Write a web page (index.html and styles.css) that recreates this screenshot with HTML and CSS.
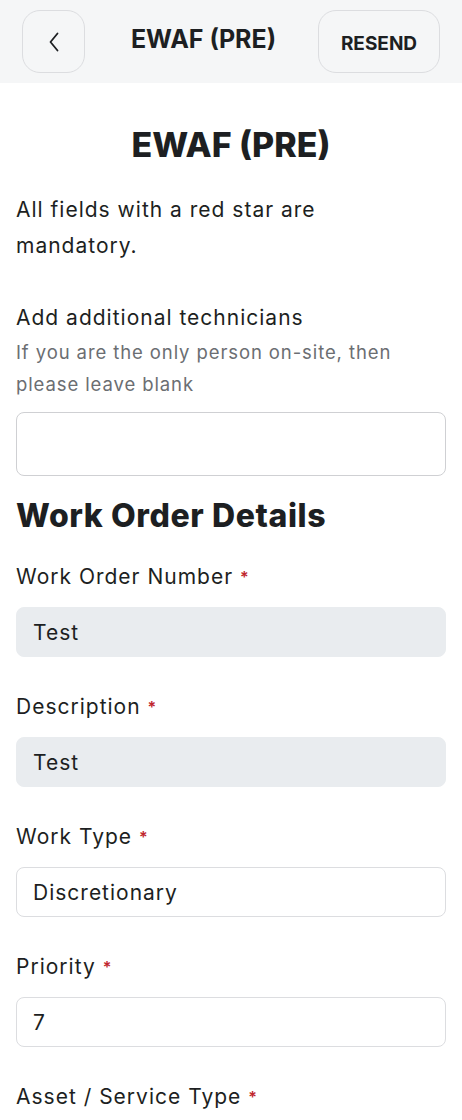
FILE: index.html
```html
<!DOCTYPE html>
<html lang="en">
<head>
    <meta charset="UTF-8">
    <meta name="viewport" content="width=device-width, initial-scale=1.0">
    <title>EWAF (PRE)</title>
    <link rel="stylesheet" href="styles.css">
</head>
<body>
    <!-- Barra superiore -->
    <header class="topbar">
        <button type="button" class="back-btn" aria-label="Back">
            <svg width="16" height="24" viewBox="0 0 16 24" fill="none">
                <path d="M11.5 3.5 L4.5 12 L11.5 20.5" stroke="#1d1f22" stroke-width="1.8" stroke-linecap="round" stroke-linejoin="round"/>
            </svg>
        </button>
        <div class="topbar-title">EWAF (PRE)</div>
        <button type="button" class="resend-btn">RESEND</button>
    </header>

    <main class="page">
        <h1>EWAF (PRE)</h1>
        <p class="intro">All fields with a red star are mandatory.</p>

        <div class="field">
            <label class="label">Add additional technicians</label>
            <p class="hint">If you are the only person on-site, then please leave blank</p>
            <input type="text" class="box box-tall">
        </div>

        <h2>Work Order Details</h2>

        <div class="field">
            <label class="label">Work Order Number <span class="req">*</span></label>
            <input type="text" class="box box-disabled" value="Test" readonly>
        </div>

        <div class="field">
            <label class="label">Description <span class="req">*</span></label>
            <input type="text" class="box box-disabled" value="Test" readonly>
        </div>

        <div class="field">
            <label class="label">Work Type <span class="req">*</span></label>
            <input type="text" class="box" value="Discretionary">
        </div>

        <div class="field">
            <label class="label">Priority <span class="req">*</span></label>
            <input type="text" class="box" value="7">
        </div>

        <div class="field">
            <label class="label">Asset / Service Type <span class="req">*</span></label>
            <input type="text" class="box">
        </div>
    </main>
</body>
</html>
```

FILE: styles.css
```css
/* Stile per la pagina */
body {
    font-family: "Inter", "Open Sans", sans-serif;
    margin: 0;
    padding: 0;
    background-color: #ffffff;
    color: #1d1f22;
}
.topbar {
    display: flex;
    align-items: center;
    justify-content: space-between;
    height: 83px;
    padding: 0 22px;
    background-color: #f5f6f7;
    box-sizing: border-box;
}
.back-btn, .resend-btn {
    height: 63px;
    background: #f5f6f7;
    border: 1px solid #dcdde0;
    border-radius: 18px;
    cursor: pointer;
}
.back-btn {
    width: 63px;
    display: flex;
    align-items: center;
    justify-content: center;
    padding: 0;
}
.resend-btn {
    width: 122px;
    font-family: inherit;
    font-size: 19px;
    font-weight: 700;
    color: #1d1f22;
    padding-top: 4px;
}
.topbar-title {
    font-size: 25px;
    font-weight: 700;
    margin-bottom: 6px;
    margin-left: 4px;
}
.page {
    padding: 0 16px;
}
h1 {
    text-align: center;
    font-size: 34px;
    font-weight: 800;
    margin: 38px 0 23px;
    line-height: 48px;
}
.intro {
    font-size: 21px;
    line-height: 36px;
    letter-spacing: 1px;
    max-width: 400px;
    margin: 0 0 37px;
}
.field {
    display: flex;
    flex-direction: column;
    margin-bottom: 33px;
}
.label {
    font-size: 21px;
    line-height: 34px;
    letter-spacing: 1px;
    margin-bottom: 13px;
}
.hint {
    font-size: 18.5px;
    line-height: 32px;
    letter-spacing: 0.9px;
    color: #6b6e72;
    margin: -12px 0 12px;
}
.req {
    color: #c0262d;
    font-size: 16px;
    font-weight: 600;
    vertical-align: top;
    letter-spacing: 0;
}
.box {
    height: 50px;
    border: 1px solid #dcdde0;
    border-radius: 8px;
    padding: 0 16px;
    font-family: inherit;
    font-size: 21px;
    letter-spacing: 1px;
    color: #1d1f22;
    background: #ffffff;
    box-sizing: border-box;
}
.box-tall {
    height: 64px;
    border-color: #cfd0d3;
}
.box-disabled {
    background-color: #e9ecef;
    border-color: #e9ecef;
}
h2 {
    font-size: 32px;
    font-weight: 800;
    margin: -15px 0 22px;
    line-height: 44px;
    letter-spacing: 0.6px;
}
```
